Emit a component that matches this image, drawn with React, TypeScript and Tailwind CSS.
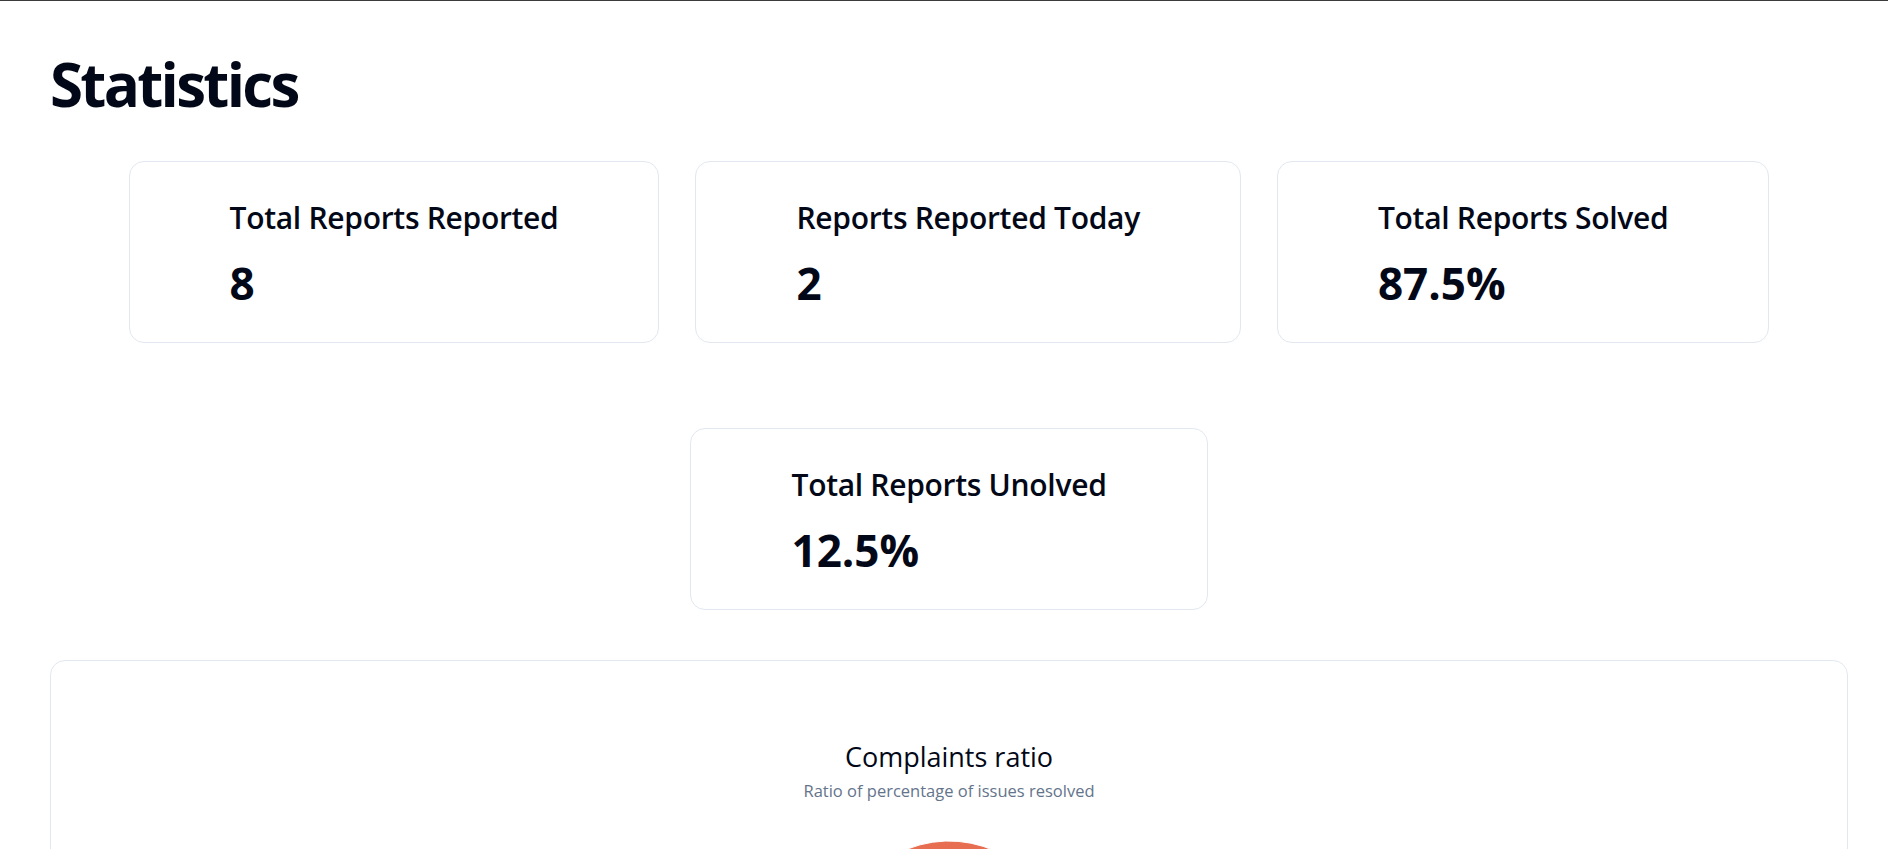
import React from "react";

type Stat = { title: string; value: string };

const stats: Stat[] = [
  { title: "Total Reports Reported", value: "8" },
  { title: "Reports Reported Today", value: "2" },
  { title: "Total Reports Solved", value: "87.5%" },
  { title: "Total Reports Unolved", value: "12.5%" },
];

function StatCard({ title, value }: Stat) {
  return (
    <div className="rounded-[15px] border border-[#e2e8f0] bg-white px-[100px] pt-[36px] pb-[35px]">
      <div className="text-[30px] font-semibold leading-[40px] tracking-[-0.01em] whitespace-nowrap">{title}</div>
      <div className="mt-[21px] text-[44px] font-bold leading-[48px]">{value}</div>
    </div>
  );
}

function Pie() {
  return (
    <svg width="240" height="240" viewBox="0 0 240 240">
      <path d="M120 120 L232 120 A112 112 0 1 0 199.2 199.2 Z" fill="#e76e50" stroke="#ffffff" strokeWidth="1" />
      <path d="M120 120 L199.2 199.2 A112 112 0 0 0 232 120 Z" fill="#2a9d90" stroke="#ffffff" strokeWidth="1" />
    </svg>
  );
}

export default function App() {
  return (
    <div className="h-[849px] overflow-hidden border-t border-[#3b3b3b] bg-white font-['Open_Sans',sans-serif] text-[#020817]">
      <div className="pl-[50px] pr-[40px]">
        <h1 className="mt-[53px] text-[60px] font-bold leading-[60px] tracking-[-0.045em]">Statistics</h1>
        <div className="mt-[47px] flex flex-wrap justify-center gap-x-[36px] gap-y-[85px]">
          {stats.map((s) => (
            <StatCard key={s.title} title={s.title} value={s.value} />
          ))}
        </div>
        <div className="mt-[50px] rounded-[15px] border border-[#e2e8f0] bg-white">
          <div className="flex flex-col items-center pt-[80px]">
            <div className="text-[27px] font-normal leading-[32px]">Complaints ratio</div>
            <div className="mt-[6px] text-[16.5px] leading-[24px] text-[#64748b]">Ratio of percentage of issues resolved</div>
            <div className="mt-[30px]">
              <Pie />
            </div>
          </div>
        </div>
      </div>
    </div>
  );
}
